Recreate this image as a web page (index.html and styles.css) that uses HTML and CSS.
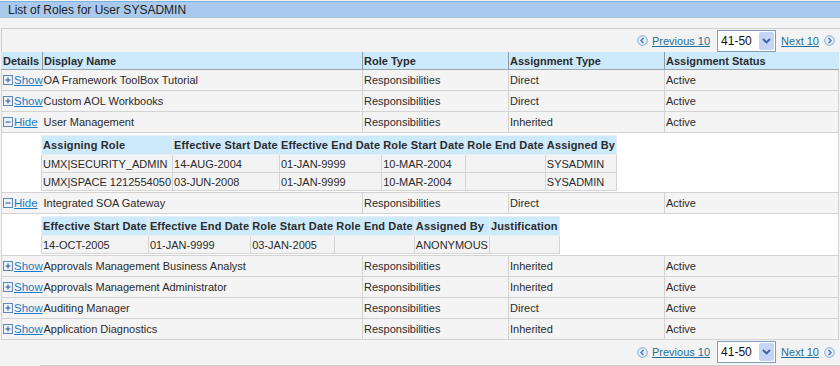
FILE: index.html
```html
<!DOCTYPE html>
<html lang="en">
<head>
    <meta charset="UTF-8">
    <title>List of Roles for User SYSADMIN</title>
    <link rel="stylesheet" href="styles.css">
</head>
<body>

    <div class="title">List of Roles for User SYSADMIN</div>

    <div class="pager pager-top">
        <svg class="nav-icon" width="11" height="11" viewBox="0 0 11 11"><circle cx="5.5" cy="5.5" r="4.8" fill="#e4eefa" stroke="#7ea6d8"/><path d="M6.5 3 L4 5.5 L6.5 8" fill="none" stroke="#3f74bd" stroke-width="1.4"/></svg>
        <a href="#" class="nav-link">Previous 10</a>
        <div class="range"><span>41-50</span><i class="drop"><svg width="9" height="6" viewBox="0 0 9 6"><path d="M1 1 L4.5 4.5 L8 1" fill="none" stroke="#3d5f9a" stroke-width="1.8"/></svg></i></div>
        <a href="#" class="nav-link">Next 10</a>
        <svg class="nav-icon" width="11" height="11" viewBox="0 0 11 11"><circle cx="5.5" cy="5.5" r="4.8" fill="#e4eefa" stroke="#7ea6d8"/><path d="M4.5 3 L7 5.5 L4.5 8" fill="none" stroke="#3f74bd" stroke-width="1.4"/></svg>
    </div>

    <table class="roles">
        <colgroup>
            <col style="width:41px">
            <col style="width:320px">
            <col style="width:146px">
            <col style="width:156px">
            <col>
        </colgroup>
        <thead>
            <tr>
                <th>Details</th>
                <th>Display Name</th>
                <th>Role Type</th>
                <th>Assignment Type</th>
                <th>Assignment Status</th>
            </tr>
        </thead>
        <tbody>
            <tr>
                <td class="det"><a href="#" class="toggle"><svg width="10" height="10" viewBox="0 0 10 10"><rect x="0.5" y="0.5" width="9" height="9" fill="#eaf2fb" stroke="#5d86bd"/><path d="M2.5 5 H7.5 M5 2.5 V7.5" stroke="#2d4f86"/></svg>Show</a></td>
                <td class="name">OA Framework ToolBox Tutorial</td>
                <td>Responsibilities</td>
                <td>Direct</td>
                <td>Active</td>
            </tr>
            <tr>
                <td class="det"><a href="#" class="toggle"><svg width="10" height="10" viewBox="0 0 10 10"><rect x="0.5" y="0.5" width="9" height="9" fill="#eaf2fb" stroke="#5d86bd"/><path d="M2.5 5 H7.5 M5 2.5 V7.5" stroke="#2d4f86"/></svg>Show</a></td>
                <td class="name">Custom AOL Workbooks</td>
                <td>Responsibilities</td>
                <td>Direct</td>
                <td>Active</td>
            </tr>
            <tr>
                <td class="det"><a href="#" class="toggle"><svg width="10" height="10" viewBox="0 0 10 10"><rect x="0.5" y="0.5" width="9" height="9" fill="#eaf2fb" stroke="#5d86bd"/><path d="M2.5 5 H7.5" stroke="#2d4f86"/></svg>Hide</a></td>
                <td class="name">User Management</td>
                <td>Responsibilities</td>
                <td>Inherited</td>
                <td>Active</td>
            </tr>
            <tr class="detail">
                <td colspan="5">
                    <table class="sub">
                        <tr>
                            <th>Assigning Role</th>
                            <th>Effective Start Date</th>
                            <th>Effective End Date</th>
                            <th>Role Start Date</th>
                            <th>Role End Date</th>
                            <th>Assigned By</th>
                        </tr>
                        <tr>
                            <td>UMX|SECURITY_ADMIN</td>
                            <td>14-AUG-2004</td>
                            <td>01-JAN-9999</td>
                            <td>10-MAR-2004</td>
                            <td></td>
                            <td>SYSADMIN</td>
                        </tr>
                        <tr>
                            <td>UMX|SPACE 1212554050</td>
                            <td>03-JUN-2008</td>
                            <td>01-JAN-9999</td>
                            <td>10-MAR-2004</td>
                            <td></td>
                            <td>SYSADMIN</td>
                        </tr>
                    </table>
                </td>
            </tr>
            <tr>
                <td class="det"><a href="#" class="toggle"><svg width="10" height="10" viewBox="0 0 10 10"><rect x="0.5" y="0.5" width="9" height="9" fill="#eaf2fb" stroke="#5d86bd"/><path d="M2.5 5 H7.5" stroke="#2d4f86"/></svg>Hide</a></td>
                <td class="name">Integrated SOA Gateway</td>
                <td>Responsibilities</td>
                <td>Direct</td>
                <td>Active</td>
            </tr>
            <tr class="detail">
                <td colspan="5">
                    <table class="sub">
                        <tr>
                            <th>Effective Start Date</th>
                            <th>Effective End Date</th>
                            <th>Role Start Date</th>
                            <th>Role End Date</th>
                            <th>Assigned By</th>
                            <th>Justification</th>
                        </tr>
                        <tr>
                            <td>14-OCT-2005</td>
                            <td>01-JAN-9999</td>
                            <td>03-JAN-2005</td>
                            <td></td>
                            <td>ANONYMOUS</td>
                            <td></td>
                        </tr>
                    </table>
                </td>
            </tr>
            <tr>
                <td class="det"><a href="#" class="toggle"><svg width="10" height="10" viewBox="0 0 10 10"><rect x="0.5" y="0.5" width="9" height="9" fill="#eaf2fb" stroke="#5d86bd"/><path d="M2.5 5 H7.5 M5 2.5 V7.5" stroke="#2d4f86"/></svg>Show</a></td>
                <td class="name">Approvals Management Business Analyst</td>
                <td>Responsibilities</td>
                <td>Inherited</td>
                <td>Active</td>
            </tr>
            <tr>
                <td class="det"><a href="#" class="toggle"><svg width="10" height="10" viewBox="0 0 10 10"><rect x="0.5" y="0.5" width="9" height="9" fill="#eaf2fb" stroke="#5d86bd"/><path d="M2.5 5 H7.5 M5 2.5 V7.5" stroke="#2d4f86"/></svg>Show</a></td>
                <td class="name">Approvals Management Administrator</td>
                <td>Responsibilities</td>
                <td>Inherited</td>
                <td>Active</td>
            </tr>
            <tr>
                <td class="det"><a href="#" class="toggle"><svg width="10" height="10" viewBox="0 0 10 10"><rect x="0.5" y="0.5" width="9" height="9" fill="#eaf2fb" stroke="#5d86bd"/><path d="M2.5 5 H7.5 M5 2.5 V7.5" stroke="#2d4f86"/></svg>Show</a></td>
                <td class="name">Auditing Manager</td>
                <td>Responsibilities</td>
                <td>Direct</td>
                <td>Active</td>
            </tr>
            <tr>
                <td class="det"><a href="#" class="toggle"><svg width="10" height="10" viewBox="0 0 10 10"><rect x="0.5" y="0.5" width="9" height="9" fill="#eaf2fb" stroke="#5d86bd"/><path d="M2.5 5 H7.5 M5 2.5 V7.5" stroke="#2d4f86"/></svg>Show</a></td>
                <td class="name">Application Diagnostics</td>
                <td>Responsibilities</td>
                <td>Inherited</td>
                <td>Active</td>
            </tr>
        </tbody>
    </table>

    <div class="pager pager-bottom">
        <svg class="nav-icon" width="11" height="11" viewBox="0 0 11 11"><circle cx="5.5" cy="5.5" r="4.8" fill="#e4eefa" stroke="#7ea6d8"/><path d="M6.5 3 L4 5.5 L6.5 8" fill="none" stroke="#3f74bd" stroke-width="1.4"/></svg>
        <a href="#" class="nav-link">Previous 10</a>
        <div class="range"><span>41-50</span><i class="drop"><svg width="9" height="6" viewBox="0 0 9 6"><path d="M1 1 L4.5 4.5 L8 1" fill="none" stroke="#3d5f9a" stroke-width="1.8"/></svg></i></div>
        <a href="#" class="nav-link">Next 10</a>
        <svg class="nav-icon" width="11" height="11" viewBox="0 0 11 11"><circle cx="5.5" cy="5.5" r="4.8" fill="#e4eefa" stroke="#7ea6d8"/><path d="M4.5 3 L7 5.5 L4.5 8" fill="none" stroke="#3f74bd" stroke-width="1.4"/></svg>
    </div>
    <div class="bottom-rule"></div>

</body>
</html>
```

FILE: styles.css
```css
body {
    font-family: 'Liberation Sans', Arial, sans-serif;
    font-size: 11px;
    margin: 0;
    padding: 0;
    background-color: #f3f3f3;
    color: #2b2b2b;
}

.title {
    margin: 1px 0 10px;
    padding-left: 8px;
    height: 15px;
    line-height: 16px;
    font-size: 12px;
    color: #222;
    background-color: #a9caee;
    border-top: 1px solid #7fb2dc;
    border-bottom: 1px solid #98c8c8;
}

.pager {
    display: flex;
    align-items: center;
    justify-content: flex-end;
    height: 23px;
    padding-right: 5px;
}

.pager-top {
    border-top: 1px solid #cfcfcf;
    border-left: 1px solid #cfcfcf;
    margin-left: 1px;
}

.pager-bottom {
    margin-top: 1px;
    height: 22px;
}

.nav-icon {
    display: block;
}

.nav-link {
    color: #1f6f96;
    text-decoration: underline;
    margin: 0 5px 0 4px;
}

.pager .range + .nav-link {
    margin: 0 5px 0 5px;
}

.range {
    display: flex;
    align-items: center;
    justify-content: space-between;
    width: 54px;
    height: 20px;
    margin: 0 0 0 2px;
    padding-left: 3px;
    background: white;
    border: 1px solid #7f9db9;
    font-size: 12px;
    color: #111;
}

.drop {
    display: flex;
    align-items: center;
    justify-content: center;
    width: 15px;
    height: 18px;
    margin-right: 1px;
    background: #c4d4f6;
    border-radius: 2px;
}

.bottom-rule {
    margin: 2px 0 0 40px;
    border-bottom: 1px solid #cfcfcf;
}

.roles {
    width: 838px;
    margin-left: 1px;
    border-collapse: collapse;
    table-layout: fixed;
}

.roles > thead th {
    height: 17px;
    padding: 0 0 0 1px;
    text-align: left;
    font-weight: bold;
    white-space: nowrap;
    background-color: #cdeafd;
    border-left: 1px solid #8e9ba6;
    border-bottom: 1px solid #9aa3aa;
}

.roles > thead th:first-child {
    border-left: 1px solid #cdeafd;
}

.roles > tbody > tr > td {
    height: 20px;
    padding: 0 0 0 1px;
    white-space: nowrap;
    overflow: hidden;
    background-color: #f4f4f4;
    border: 1px solid #d3d3d3;
}

.roles > tbody > tr > td.det {
    padding-left: 1px;
    border-right: none;
}

.roles > tbody > tr > td.name {
    border-left: none;
    padding-left: 1px;
}

.toggle {
    display: flex;
    align-items: center;
    gap: 1px;
    color: #1d7bc4;
    text-decoration: underline;
    font-size: 11.5px;
}

.toggle svg {
    flex-shrink: 0;
}

.roles > tbody > tr.detail > td {
    height: auto;
    padding: 2px 0 1px 39px;
    background-color: white;
}

.sub {
    border-collapse: collapse;
}

.sub th {
    height: 18px;
    padding: 0 1px;
    text-align: left;
    white-space: nowrap;
    letter-spacing: 0.15px;
    background-color: #cdeafd;
    border: 1px solid #e7eef4;
}

.sub td {
    height: 17px;
    padding: 0 1px;
    white-space: nowrap;
    background-color: #f3f3f3;
    border: 1px solid #d5d5d5;
}
```
